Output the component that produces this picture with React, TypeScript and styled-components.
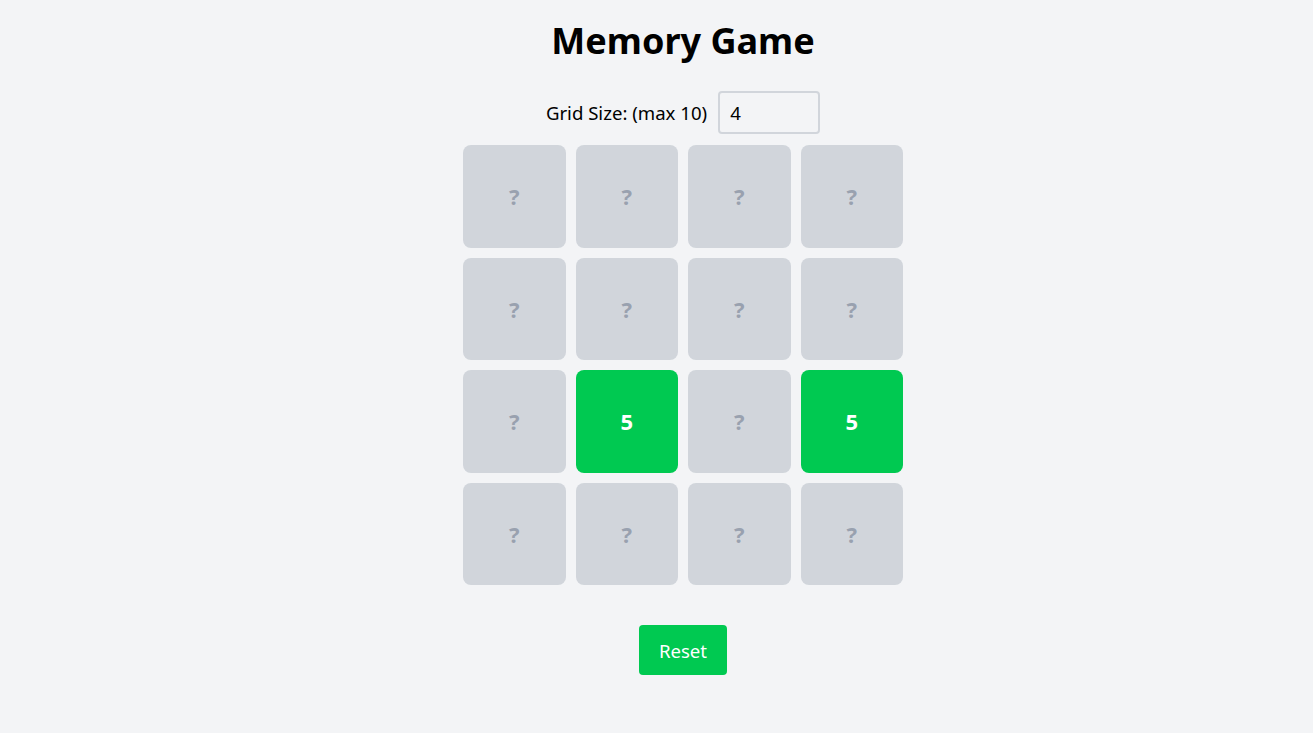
import React, { useState } from "react";
import styled, { createGlobalStyle } from "styled-components";

const Global = createGlobalStyle`
  html, body { margin: 0; padding: 0; background: #f3f4f6; }
  body { font-family: "Noto Sans", "Open Sans", sans-serif; color: #000; }
`;

const Page = styled.div`
  display: flex;
  flex-direction: column;
  align-items: center;
  padding: 17px 0 40px 53px;
  min-height: 733px;
  box-sizing: border-box;
`;

const Title = styled.h1`
  margin: 0;
  font-size: 36px;
  line-height: 48px;
  font-weight: 700;
`;

const Controls = styled.div`
  display: flex;
  align-items: center;
  gap: 11px;
  margin-top: 26px;
`;

const Label = styled.label`
  font-size: 18.6px;
`;

const Input = styled.input`
  width: 102px;
  height: 43px;
  box-sizing: border-box;
  border: 2px solid #d1d5db;
  border-radius: 4px;
  background: transparent;
  padding: 0 10px;
  font-family: inherit;
  font-size: 18.6px;
  color: #000;
  outline: none;
`;

const Grid = styled.div<{ $n: number }>`
  display: grid;
  grid-template-columns: repeat(${(p) => p.$n}, 102.5px);
  grid-auto-rows: 102.5px;
  gap: 10px;
  margin-top: 11px;
`;

const Card = styled.div<{ $open: boolean }>`
  display: flex;
  align-items: center;
  justify-content: center;
  border-radius: 8px;
  background: ${(p) => (p.$open ? "#00c951" : "#d1d5db")};
  color: ${(p) => (p.$open ? "#ffffff" : "#99a1af")};
  font-size: 22px;
  font-weight: 700;
  cursor: pointer;
`;

const Reset = styled.button`
  margin-top: 40px;
  width: 88px;
  height: 50px;
  border: none;
  border-radius: 4px;
  background: #00c951;
  color: #fff;
  font-family: inherit;
  font-size: 18.6px;
  cursor: pointer;
`;

const values = [1, 2, 3, 4, 6, 7, 8, 1, 2, 5, 3, 5, 4, 6, 7, 8];
const openSet = new Set([9, 11]);

export default function App() {
  const [size, setSize] = useState("4");
  return (
    <>
      <Global />
      <Page>
        <Title>Memory Game</Title>
        <Controls>
          <Label htmlFor="gs">Grid Size: (max 10)</Label>
          <Input id="gs" value={size} onChange={(e) => setSize(e.target.value)} />
        </Controls>
        <Grid $n={4}>
          {values.map((v, i) => (
            <Card key={i} $open={openSet.has(i)}>
              {openSet.has(i) ? v : "?"}
            </Card>
          ))}
        </Grid>
        <Reset>Reset</Reset>
      </Page>
    </>
  );
}
